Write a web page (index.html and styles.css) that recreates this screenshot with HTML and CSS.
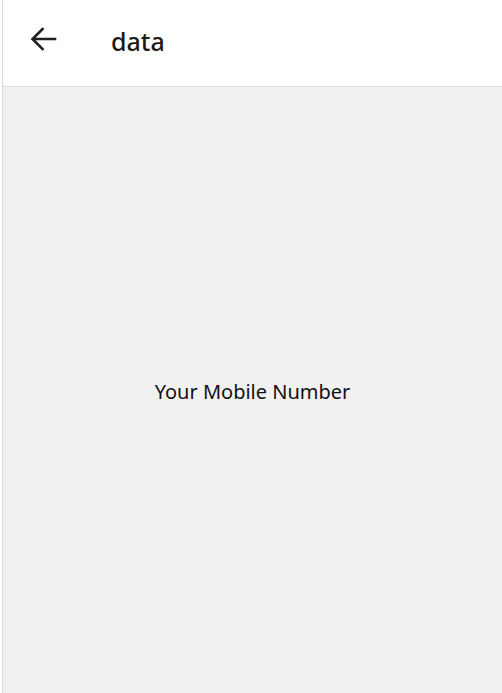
FILE: index.html
```html
<!DOCTYPE html>
<html lang="en">
<head>
<meta charset="utf-8">
<link rel="stylesheet" href="styles.css">
<title>data</title>
</head>
<body>
<div class="frame">
  <header class="bar">
    <button class="back" aria-label="Back">
      <svg width="28" height="26" viewBox="0 0 28 26" aria-hidden="true">
        <path d="M26 13H4M13.5 3L3.5 13l10 10" fill="none" stroke="#1f1f1f" stroke-width="2.6" stroke-linecap="square" stroke-linejoin="miter"/>
      </svg>
    </button>
    <h1 class="title">data</h1>
  </header>
  <main class="content">
    <p class="label">Your Mobile Number</p>
  </main>
</div>
</body>
</html>
```
FILE: styles.css
```css
html, body {
  margin: 0;
  padding: 0;
  height: 100%;
  background: #ffffff;
}
body {
  padding-left: 2px;
  box-sizing: border-box;
  font-family: "Noto Sans", "Open Sans", sans-serif;
}
.frame {
  height: 100%;
  display: flex;
  flex-direction: column;
  border-left: 1px solid #dadada;
}
.bar {
  height: 86px;
  flex: 0 0 auto;
  display: flex;
  align-items: center;
  background: #ffffff;
  border-bottom: 1px solid #dcdcdc;
}
.back {
  margin-left: 26px;
  width: 28px;
  height: 26px;
  padding: 0;
  border: 0;
  background: none;
  display: flex;
  margin-top: -8px;
}
.title {
  margin: -5px 0 0 54px;
  font-size: 25px;
  font-weight: 500;
  color: #201a17;
}
.content {
  flex: 1 1 auto;
  background: #f1f1f1;
  display: flex;
  align-items: center;
  justify-content: center;
}
.label {
  margin: 2px 0 0 0;
  font-size: 20px;
  color: #111111;
}
```
